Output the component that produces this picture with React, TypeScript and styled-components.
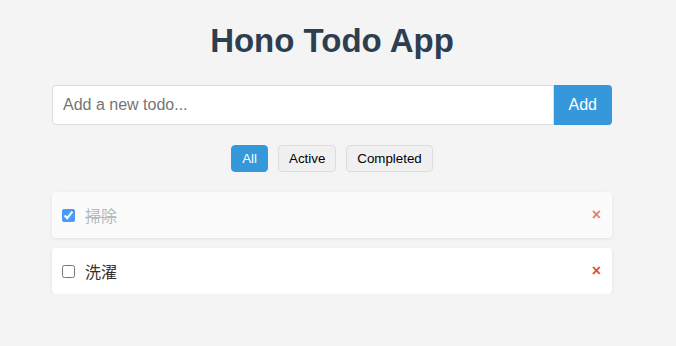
import { useState } from "react";
import styled, { createGlobalStyle } from "styled-components";

const GlobalStyles = createGlobalStyle`
  html, body {
    margin: 0;
    background: #f4f4f4;
    font-family: "Liberation Sans", Arial, "Noto Sans CJK JP", sans-serif;
  }
`;

const Page = styled.div`
  padding-right: 12px;
`;

const Container = styled.div`
  width: 560px;
  margin: 0 auto;
`;

const Title = styled.h1`
  margin: 22px 0 25px;
  font-size: 33px;
  line-height: 38px;
  font-weight: bold;
  text-align: center;
  color: #2c3e50;
`;

const Form = styled.form`
  display: flex;
  margin-bottom: 20px;
`;

const Input = styled.input`
  flex: 1;
  height: 40px;
  box-sizing: border-box;
  padding: 10px;
  font-size: 16px;
  font-family: "Liberation Sans", Arial, "Noto Sans CJK JP", sans-serif;
  border: 1px solid #ddd;
  border-radius: 4px 0 0 4px;
  outline: none;
  &::placeholder {
    color: #757575;
  }
`;

const AddButton = styled.button`
  height: 40px;
  padding: 0 15px;
  font-size: 16px;
  font-family: "Liberation Sans", Arial, sans-serif;
  color: #fff;
  background: #3498db;
  border: none;
  border-radius: 0 4px 4px 0;
  cursor: pointer;
`;

const Filters = styled.div`
  display: flex;
  justify-content: center;
  gap: 10px;
  margin-bottom: 20px;
`;

const FilterButton = styled.button<{ $active: boolean }>`
  height: 27px;
  padding: 0 10px;
  font-size: 13.333px;
  font-family: "Liberation Sans", Arial, sans-serif;
  border: 1px solid ${({ $active }) => ($active ? "#3498db" : "#ddd")};
  border-radius: 4px;
  background: ${({ $active }) => ($active ? "#3498db" : "#f0f0f0")};
  color: ${({ $active }) => ($active ? "#fff" : "#000")};
  cursor: pointer;
`;

const List = styled.ul`
  list-style: none;
  margin: 0;
  padding: 0;
  display: flex;
  flex-direction: column;
  gap: 10px;
`;

const Item = styled.li<{ $done: boolean }>`
  display: flex;
  align-items: center;
  height: 46px;
  box-sizing: border-box;
  padding: 0 10px;
  background: #fff;
  border-radius: 4px;
  box-shadow: 0 1px 3px rgba(0, 0, 0, 0.1);
  opacity: ${({ $done }) => ($done ? 0.7 : 1)};
`;

const Check = styled.input`
  width: 13px;
  height: 13px;
  margin: 0 10px 0 0;
`;

const Label = styled.span<{ $done: boolean }>`
  flex: 1;
  font-size: 16px;
  font-family: "Liberation Sans", "Noto Sans CJK JP", sans-serif;
  color: ${({ $done }) => ($done ? "#95a5a6" : "#333")};
  text-decoration: ${({ $done }) => ($done ? "line-through" : "none")};
`;

const DeleteButton = styled.button`
  padding: 0;
  margin-right: 1px;
  background: none;
  border: none;
  font-size: 16px;
  font-weight: bold;
  font-family: "Liberation Sans", Arial, sans-serif;
  color: #e74c3c;
  cursor: pointer;
`;

type Todo = { id: number; text: string; done: boolean };

export default function App() {
  const [todos, setTodos] = useState<Todo[]>([
    { id: 1, text: "掃除", done: true },
    { id: 2, text: "洗濯", done: false },
  ]);
  const [filter, setFilter] = useState("all");
  const [text, setText] = useState("");

  const toggle = (id: number) =>
    setTodos((ts) => ts.map((t) => (t.id === id ? { ...t, done: !t.done } : t)));

  const shown = todos.filter((t) =>
    filter === "active" ? !t.done : filter === "completed" ? t.done : true
  );

  return (
    <Page>
      <GlobalStyles />
      <Container>
        <Title>Hono Todo App</Title>
        <Form
          onSubmit={(e) => {
            e.preventDefault();
            if (!text.trim()) return;
            setTodos((ts) => [...ts, { id: Date.now(), text, done: false }]);
            setText("");
          }}
        >
          <Input
            placeholder="Add a new todo..."
            value={text}
            onChange={(e) => setText(e.target.value)}
          />
          <AddButton type="submit">Add</AddButton>
        </Form>
        <Filters>
          <FilterButton $active={filter === "all"} onClick={() => setFilter("all")}>All</FilterButton>
          <FilterButton $active={filter === "active"} onClick={() => setFilter("active")}>Active</FilterButton>
          <FilterButton $active={filter === "completed"} onClick={() => setFilter("completed")}>Completed</FilterButton>
        </Filters>
        <List>
          {shown.map((t) => (
            <Item key={t.id} $done={t.done}>
              <Check type="checkbox" checked={t.done} onChange={() => toggle(t.id)} />
              <Label $done={t.done}>{t.text}</Label>
              <DeleteButton onClick={() => setTodos((ts) => ts.filter((x) => x.id !== t.id))}>×</DeleteButton>
            </Item>
          ))}
        </List>
      </Container>
    </Page>
  );
}
